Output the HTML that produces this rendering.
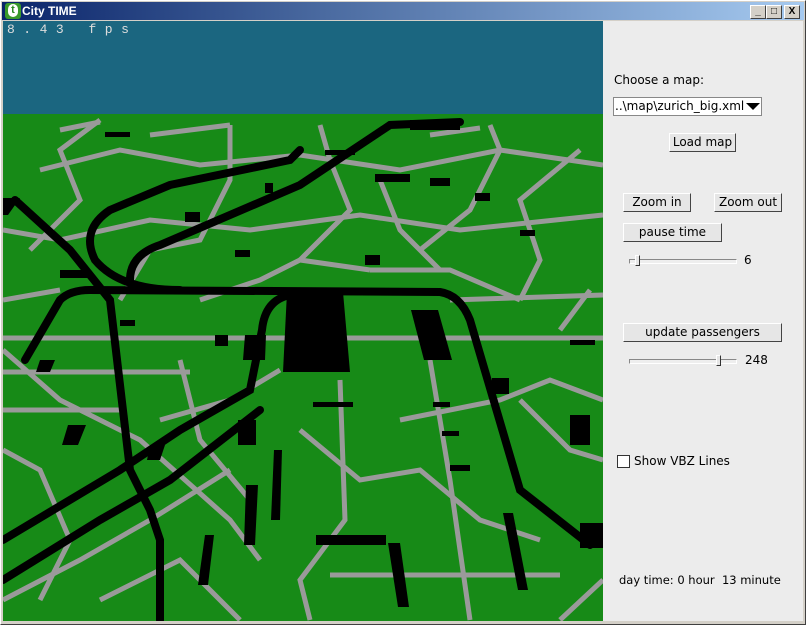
<!DOCTYPE html>
<html><head><style>
*{margin:0;padding:0;box-sizing:border-box}
body{width:806px;height:625px;background:#d4d0c8;font-family:"DejaVu Sans","Liberation Sans",sans-serif;position:relative;overflow:hidden}
.win{position:absolute;left:0;top:0;width:806px;height:625px;border:1px solid #fff;border-right-color:#404040;border-bottom-color:#404040}
.title{position:absolute;left:2px;top:2px;width:802px;height:18px;background:linear-gradient(90deg,#0a246a,#4a6aa0 40%,#a6caf0)}
.title span{position:absolute;left:20px;top:2px;color:#fff;font:bold 12px "Liberation Sans",sans-serif}
.ico{position:absolute;left:3px;top:1px;width:16px;height:16px;background:#3a9a2a;border-radius:3px}
.ico:after{content:"t";position:absolute;left:3px;top:1px;width:10px;height:13px;background:#fff;border-radius:5px;color:#2a8a20;font:bold 11px sans-serif;text-align:center;line-height:13px}
.tb{position:absolute;top:5px;width:16px;height:14px;background:#d4d0c8;border:1px solid #fff;border-right-color:#404040;border-bottom-color:#404040;font:bold 10px sans-serif;text-align:center;line-height:12px;color:#000}
.panel{position:absolute;left:603px;top:21px;width:200px;height:600px;background:#ececec}
.fps{position:absolute;left:7px;top:22px;color:#ddd;font:13px "Liberation Mono",monospace;letter-spacing:8.5px}
svg{position:absolute;left:3px;top:21px}
.t{position:absolute;font-size:12px;color:#000;white-space:nowrap}
.btn{position:absolute;height:19px;background:#e6e6e6;border:1px solid #fff;border-right-color:#444;border-bottom-color:#444;font-size:12px;text-align:center;line-height:17px;white-space:nowrap}
.sl{position:absolute;height:5px;border:1px solid #888;border-right-color:#fff;border-bottom-color:#fff;background:#eee}
.th{position:absolute;width:5px;height:11px;background:#e6e6e6;border:1px solid #fff;border-right-color:#333;border-bottom-color:#333}
</style></head><body>
<div class="win"></div>
<div class="title"><div class="ico"></div><span>City TIME</span></div>
<div class="tb" style="left:750px">_</div>
<div class="tb" style="left:766px">□</div>
<div class="tb" style="left:784px">X</div>
<div class="panel"></div>
<svg width="600" height="600" viewBox="3 21 600 600">
<rect x="3" y="21" width="600" height="600" fill="#178a17"/>
<rect x="3" y="21" width="600" height="93" fill="#1b6680"/>
<g stroke="#9a9a9a" stroke-width="5" fill="none">
<path d="M3 338H603M3 372H190M3 410H120M330 575H560M40 170L120 150L200 165L300 155L400 170L500 150L603 165"/>
<path d="M3 230L60 240L150 220L250 230L360 215L460 230L603 215M3 300L60 290M450 300L603 295M60 130L100 122M150 135L230 125M430 135L480 128"/>
<path d="M30 250L80 200L60 150L100 120M120 300L150 250L200 240L230 180L230 125M300 260L350 210L330 160L320 125M420 250L470 210L500 150L490 125M520 300L540 260L520 200L580 150"/>
<path d="M200 300L260 280L300 260L370 270M370 270L450 270L520 300M440 270L400 230L380 180"/>
<path d="M3 350L60 400L140 440L230 520L260 560M3 450L40 470L70 540L40 600M340 380L345 520L300 580L310 620M430 360L450 480L470 620M520 400L570 450L603 460M3 600L80 560L150 520L230 470M100 600L180 560L240 620"/>
<path d="M160 420L230 400L280 370M180 360L200 440L250 500M300 430L360 480L420 470L480 520L540 540M400 420L500 400L550 380L603 400M560 330L590 290M560 620L603 580"/>
</g>
<g stroke="#000" stroke-width="8" fill="none" stroke-linecap="round">
<path d="M15 200L70 250L110 300L130 470L150 510L160 540L160 620"/>
<path d="M25 360L60 300Q70 290 90 290L440 292Q460 295 470 320L520 490L590 545"/>
<path d="M3 540L120 470L180 430L250 390L262 330Q265 300 290 295"/>
<path d="M3 580L100 520L170 480L260 410"/>
<path d="M130 280Q130 255 160 245L300 185L390 125L460 122"/>
<path d="M180 290Q120 290 95 260Q80 230 110 210L170 185L290 160L300 150"/>
</g>
<g fill="#000">
<polygon points="287,292 343,292 350,372 283,372"/>
<polygon points="411,310 438,310 452,360 424,360"/>
<polygon points="245,335 266,335 265,360 243,360"/>
<polygon points="3,198 20,198 8,215 3,215"/>
<rect x="410" y="120" width="50" height="10"/><rect x="105" y="132" width="25" height="5"/>
<rect x="325" y="150" width="30" height="5"/><rect x="375" y="174" width="35" height="8"/>
<rect x="185" y="212" width="15" height="10"/><rect x="235" y="250" width="15" height="7"/>
<rect x="365" y="255" width="15" height="10"/><rect x="60" y="270" width="30" height="8"/>
<rect x="215" y="335" width="13" height="11"/><rect x="238" y="420" width="18" height="25"/>
<rect x="313" y="402" width="40" height="5"/><rect x="433" y="402" width="17" height="5"/>
<rect x="442" y="431" width="17" height="5"/><rect x="450" y="465" width="20" height="6"/>
<rect x="492" y="378" width="17" height="16"/><rect x="570" y="415" width="20" height="30"/>
<rect x="580" y="523" width="23" height="25"/><rect x="316" y="535" width="70" height="10"/>
<polygon points="246,485 258,485 255,545 244,545"/><polygon points="274,450 282,450 280,520 271,520"/>
<polygon points="205,535 214,535 208,585 198,585"/><polygon points="388,543 400,543 409,607 398,607"/>
<polygon points="503,513 513,513 528,590 518,590"/><polygon points="68,425 86,425 78,445 62,445"/>
<polygon points="150,445 165,445 160,460 147,460"/><polygon points="40,360 55,360 50,372 36,372"/>
<rect x="120" y="320" width="15" height="6"/><rect x="520" y="230" width="15" height="6"/>
<rect x="570" y="340" width="25" height="5"/><rect x="430" y="178" width="20" height="8"/>
<rect x="475" y="193" width="15" height="8"/><rect x="265" y="183" width="8" height="10"/>
</g>
</svg>
<div class="fps">8.43 fps</div>
<div class="t" style="left:614px;top:73px">Choose a map:</div>
<div style="position:absolute;left:613px;top:97px;width:149px;height:19px;background:#fff;border:1px solid #888;font-size:12px;line-height:17px;padding-left:1px;overflow:hidden;white-space:nowrap">..\map\zurich_big.xml<span style="position:absolute;right:1px;top:5px;border:7px solid transparent;border-top:7px solid #000;border-bottom:0"></span></div>
<div class="btn" style="left:669px;top:133px;width:67px">Load map</div>
<div class="btn" style="left:623px;top:193px;width:68px">Zoom in</div>
<div class="btn" style="left:714px;top:193px;width:68px">Zoom out</div>
<div class="btn" style="left:623px;top:223px;width:99px">pause time</div>
<div class="sl" style="left:629px;top:259px;width:108px"></div><div class="th" style="left:635px;top:255px"></div>
<div class="t" style="left:744px;top:253px">6</div>
<div class="btn" style="left:623px;top:323px;width:159px">update passengers</div>
<div class="sl" style="left:629px;top:359px;width:108px"></div><div class="th" style="left:716px;top:355px"></div>
<div class="t" style="left:745px;top:353px">248</div>
<div style="position:absolute;left:617px;top:455px;width:13px;height:13px;background:#fff;border:1px solid #333"></div>
<div class="t" style="left:634px;top:454px">Show VBZ Lines</div>
<div class="t" style="left:619px;top:573px;font-size:11.5px">day time: 0 hour &nbsp;13 minute</div>
</body></html>
